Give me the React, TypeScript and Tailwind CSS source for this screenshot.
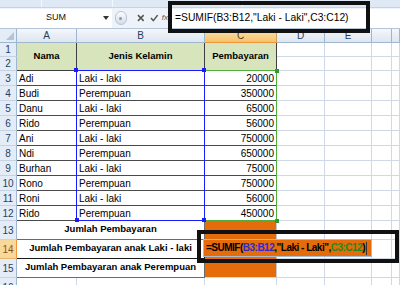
import React from "react";

const rowsData: [string, string, string][] = [
  ["Adi", "Laki - laki", "20000"],
  ["Budi", "Perempuan", "350000"],
  ["Danu", "Laki - laki", "65000"],
  ["Rido", "Perempuan", "56000"],
  ["Ani", "Laki - laki", "750000"],
  ["Ndi", "Perempuan", "650000"],
  ["Burhan", "Laki - laki", "75000"],
  ["Rono", "Perempuan", "750000"],
  ["Roni", "Laki - laki", "56000"],
  ["Rido", "Perempuan", "450000"],
];

function RowHead({ n, active }: { n: number; active?: boolean }) {
  return (
    <div
      className={
        active
          ? "flex items-center justify-center border-r border-b border-r-[#f29436] border-b-[#e8b36a] bg-[#f9d89c] text-[10px] text-[#8a5416]"
          : "flex items-center justify-center border-r border-b border-r-[#9eb6ce] border-b-[#c5d3e4] bg-[#e4ecf7] text-[10px] text-[#27415f]"
      }
    >
      {n}
    </div>
  );
}

function Blank() {
  return <div className="border-r border-b border-[#d0d7e5] bg-white" />;
}

function Blanks() {
  return (
    <>
      <Blank />
      <Blank />
      <Blank />
      <Blank />
    </>
  );
}

function ColHead({ label, active }: { label: string; active?: boolean }) {
  return (
    <div
      className={
        active
          ? "flex items-center justify-center border-r border-b border-r-[#c9a15c] border-b-[#f29436] bg-linear-to-b from-[#fbe0ad] to-[#f4c36a] text-[10px] text-[#5a3a10]"
          : "flex items-center justify-center border-r border-b border-[#9eb6ce] bg-linear-to-b from-[#f4f7fb] to-[#dfe6f0] text-[10px] text-[#27415f]"
      }
    >
      {label}
    </div>
  );
}

export default function App() {
  return (
    <div className="relative h-[285px] w-[400px] overflow-hidden bg-white font-['Liberation_Sans',Arial,sans-serif]">
      {/* ribbon bottom strip */}
      <div className="flex h-[8px] border-b border-[#c4d3e6] bg-[#dfe8f5]">
        <div className="w-[42px] border-r border-[#f4f8fd]" />
        <div className="w-[71px] border-r border-[#f4f8fd]" />
        <div className="w-[130px] border-r border-[#f4f8fd]" />
        <div className="flex-1" />
      </div>

      {/* formula bar */}
      <div className="flex h-[21px] items-center border-b border-[#b4c4d9] bg-[#eef3fa]">
        <div className="relative flex h-[19px] w-[112px] items-center justify-center bg-white text-[9px] text-[#111]">
          SUM
          <svg className="absolute right-[3px] top-[7px]" width="6" height="4" viewBox="0 0 6 4">
            <path d="M0 0 L6 0 L3 4 Z" fill="#333" />
          </svg>
        </div>
        <div className="flex h-[19px] w-[56px] items-center">
          <div className="ml-[3px] flex h-[14px] w-[12px] items-center justify-center rounded-full border border-[#b8c4d2] bg-linear-to-b from-[#fbfcfe] to-[#d4dce8]">
            <div className="h-[3px] w-[3px] rounded-full bg-[#8a98aa]" />
          </div>
          <svg className="ml-[10px]" width="8" height="8" viewBox="0 0 8 8">
            <path d="M1 1 L7 7 M7 1 L1 7" stroke="#555" strokeWidth="1.6" />
          </svg>
          <svg className="ml-[6px]" width="9" height="8" viewBox="0 0 9 8">
            <path d="M1 4 L3.5 6.8 L8 1" stroke="#555" strokeWidth="1.6" fill="none" />
          </svg>
          <span className="ml-[3px] text-[8px] italic text-[#555]">fx</span>
        </div>
        <div className="flex h-[19px] flex-1 items-center whitespace-pre bg-white pl-[7px] text-[10.3px] text-black">
          =SUMIF(B3:B12,"Laki - Laki",C3:C12)
        </div>
      </div>

      {/* sheet grid */}
      <div className="grid grid-cols-[17px_60px_128px_72px_48px_47px_20px_8px] grid-rows-[14px_14px_14px_repeat(10,15px)_19px_19px_19px_19px]">
        {/* header row */}
        <div className="relative border-r border-b border-[#9eb6ce] bg-[#e4ecf7]">
          <svg className="absolute bottom-[2px] right-[2px]" width="8" height="8" viewBox="0 0 8 8">
            <path d="M8 0 L8 8 L0 8 Z" fill="#b3c3d8" />
          </svg>
        </div>
        <ColHead label="A" />
        <ColHead label="B" />
        <ColHead label="C" active />
        <ColHead label="D" />
        <ColHead label="E" />
        <ColHead label="" />
        <ColHead label="" />

        {/* rows 1-2 */}
        <RowHead n={1} />
        <div className="row-span-2 flex items-center justify-center border-r border-b border-[#3f3f3f] bg-[#d7e4bc] text-[9.5px] font-bold text-black">
          Nama
        </div>
        <div className="row-span-2 flex items-center justify-center border-r border-b border-[#3f3f3f] bg-[#d7e4bc] text-[9.5px] font-bold text-black">
          Jenis Kelamin
        </div>
        <div className="row-span-2 flex items-center justify-center border-r border-b border-[#3f3f3f] bg-[#d7e4bc] text-[9.5px] font-bold text-black">
          Pembayaran
        </div>
        <Blanks />
        <RowHead n={2} />
        <Blanks />

        {/* data rows */}
        {rowsData.map((r, i) => (
          <React.Fragment key={i}>
            <RowHead n={i + 3} />
            <div className="flex items-center border-r border-b border-[#4a4a4a] bg-white pl-[2px] pt-[1px] text-[10px] text-black">
              {r[0]}
            </div>
            <div className="flex items-center border-r border-b border-[#4a4a4a] bg-white pl-[2px] pt-[1px] text-[10px] text-black">
              {r[1]}
            </div>
            <div className="flex items-center justify-end border-r border-b border-[#4a4a4a] bg-white pr-[2px] pt-[1px] text-[10px] text-black">
              {r[2]}
            </div>
            <Blanks />
          </React.Fragment>
        ))}

        {/* row 13 */}
        <RowHead n={13} />
        <div className="col-span-2 flex items-end justify-center border-r border-b border-[#6a6a6a] bg-white pb-[3px] text-[9.5px] font-bold text-black">
          Jumlah Pembayaran
        </div>
        <div className="border-r border-b border-r-[#c9c9c9] border-b-[#e46c0a] bg-[#e46c0a]" />
        <Blanks />

        {/* row 14 */}
        <RowHead n={14} active />
        <div className="col-span-2 flex items-end justify-center border-r border-b border-[#1a1a1a] bg-white pb-[3px] text-[9.5px] font-bold text-black">
          Jumlah Pembayaran anak Laki - laki
        </div>
        <div className="border-r border-b border-r-[#c9c9c9] border-b-[#e46c0a] bg-[#e46c0a]" />
        <Blanks />

        {/* row 15 */}
        <RowHead n={15} />
        <div className="col-span-2 flex items-end justify-center border-r border-b border-[#6a6a6a] bg-white pb-[3px] text-[9.5px] font-bold text-black">
          Jumlah Pembayaran anak Perempuan
        </div>
        <div className="border-r border-b border-r-[#c9c9c9] border-b-[#d9d9d9] bg-[#e46c0a]" />
        <Blanks />

        {/* row 16 */}
        <RowHead n={16} />
        <Blank />
        <Blank />
        <Blank />
        <Blanks />
      </div>

      {/* range highlight C3:C12 (green) */}
      <div className="absolute left-[204px] top-[70px] h-[151px] w-[73px] border border-[#4fae3c]" />
      {/* range highlight B3:B12 (blue) */}
      <div className="absolute left-[76px] top-[70px] h-[151px] w-[129px] border border-[#1a1aff]" />
      {/* corner handles */}
      <div className="absolute left-[275px] top-[69px] h-[4px] w-[4px] bg-[#2f9a2f]" />
      <div className="absolute left-[275px] top-[219px] h-[4px] w-[4px] bg-[#2f9a2f]" />
      <div className="absolute left-[74px] top-[68px] h-[4px] w-[4px] bg-[#1a1aff]" />
      <div className="absolute left-[202px] top-[68px] h-[4px] w-[4px] bg-[#1a1aff]" />
      <div className="absolute left-[75px] top-[218px] h-[4px] w-[4px] bg-[#1a1aff]" />
      <div className="absolute left-[202px] top-[218px] h-[4px] w-[4px] bg-[#1a1aff]" />

      {/* in-cell edit box */}
      <div className="absolute left-[203px] top-[239px] h-[18px] w-[169px] overflow-hidden whitespace-pre border border-[#a9bcd6] bg-[#e46c0a] pl-[2px] text-[10px] font-bold leading-[16px] tracking-[-0.5px] text-black">
        =SUMIF(<span className="text-[#2b2bd0]">B3:B12</span>,"Laki - Laki",<span className="text-[#1e8a1e]">C3:C12</span>)<span className="ml-[1px] inline-block h-[13px] w-[1px] align-middle bg-[#333]" />
      </div>

      {/* annotation boxes */}
      <div className="absolute left-[168px] top-[1px] h-[32px] w-[202px] border-4 border-[#111]" />
      <div className="absolute left-[197px] top-[230px] h-[33px] w-[202px] border-4 border-[#111]" />
    </div>
  );
}
